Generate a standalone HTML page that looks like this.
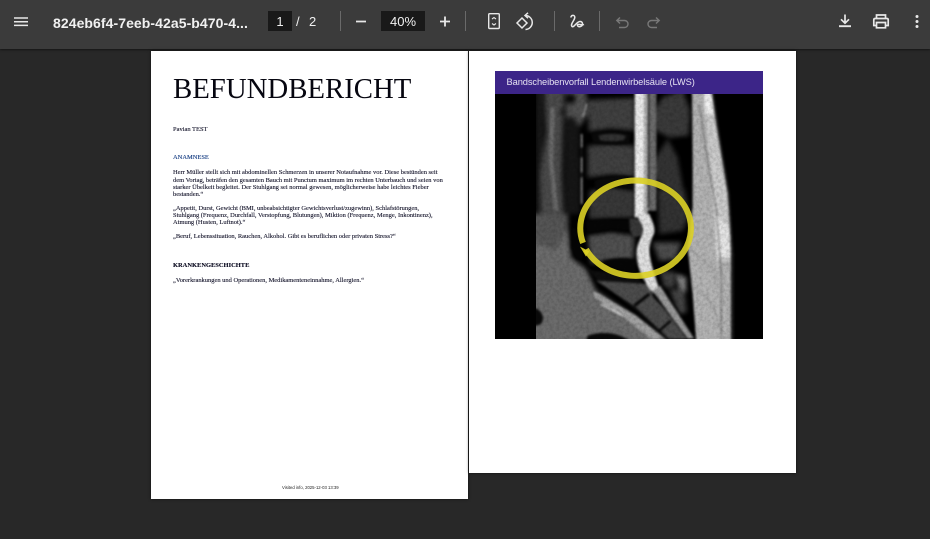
<!DOCTYPE html>
<html><head><meta charset="utf-8">
<style>
html,body{margin:0;padding:0;width:930px;height:539px;overflow:hidden;background:#282828}
.abs{position:absolute}
#bar{position:absolute;left:0;top:0;width:930px;height:49px;background:#3b3b3b;box-shadow:0 1px 2px rgba(0,0,0,.5)}
.ui{position:absolute;font-family:"Liberation Sans",sans-serif;color:#f1f1f1;white-space:nowrap}
.box{position:absolute;background:#191919;top:11px;height:20px}
.sep{position:absolute;top:11px;width:1px;height:20px;background:#6a6a6a}
.page{position:absolute;background:#fff}
.t{position:absolute;left:173px;font-family:"Liberation Serif",serif;font-size:6.46px;line-height:8px;color:#14142a;white-space:nowrap;-webkit-text-stroke:.12px #14142a;filter:blur(.25px)}
</style></head><body>
<div id="bar"></div>
<div class="ui" style="left:53px;top:14px;font-size:14px;font-weight:bold;line-height:18px;letter-spacing:.07px">824eb6f4-7eeb-42a5-b470-4...</div>
<div class="box" style="left:268px;width:24px"></div>
<div class="ui" style="left:268px;width:24px;text-align:center;top:14px;font-size:13px;line-height:16px">1</div>
<div class="ui" style="left:296px;top:14px;font-size:13px;line-height:16px">/</div>
<div class="ui" style="left:309px;top:14px;font-size:13px;line-height:16px">2</div>
<div class="sep" style="left:340px"></div>
<div class="box" style="left:381px;width:44px"></div>
<div class="ui" style="left:381px;width:44px;text-align:center;top:14px;font-size:13px;line-height:16px">40%</div>
<div class="sep" style="left:465px"></div>
<div class="sep" style="left:554px"></div>
<div class="sep" style="left:599px"></div>
<svg class="abs" style="left:0;top:0" width="930" height="49" viewBox="0 0 930 49" fill="none" stroke="#e8e8e8" stroke-width="1.4">
<path d="M14 18H28M14 21.7H28M14 25.4H28" stroke-width="1.5"/>
<path d="M356 21.5H366M440 21.5H450M445 16.5V26.5" stroke-width="1.8"/>
<rect x="488.7" y="13.7" width="10.6" height="14.8" rx="1"/>
<path d="M492 19L494 17.5L496 19M492 23.5L494 25L496 23.5" stroke-width="1.1"/>
<path d="M525 15.5A7 7 0 1 1 525.5 29.5M528 12.8L525 15.5L528 18.2" stroke-width="1.5"/>
<path d="M522 18L527 23L522 28L517 23Z" stroke-width="1.5"/>
<path d="M570.8 17.5C571.5 14.5 575 14.8 574.8 17.5C574.5 20.5 570 24.5 572 26.5C574 28 576.5 21.5 580 21.5C583 21.5 583.5 25.5 580.5 26.5C578 27.3 576.5 25 578 24.5C580 24 582 25.5 584 24.5" stroke-width="1.5"/>
<path d="M620 17.5L616.8 20.5L620 23.5M617 20.5H624.5A3.5 3.5 0 0 1 624.5 27.5H619" stroke="#787878"/>
<path d="M656 17.5L659.2 20.5L656 23.5M659 20.5H651.5A3.5 3.5 0 0 0 651.5 27.5H657" stroke="#787878"/>
<path d="M845 14.5V23M841 19.3L845 23.2L849 19.3" stroke-width="1.7"/>
<path d="M839 26.2H851" stroke-width="1.9"/>
<path d="M876.5 18.5V15H885.5V18.5M876.5 25.5H873.8V19.8C873.8 19 874.4 18.5 875.2 18.5H886.8C887.6 18.5 888.2 19 888.2 19.8V25.5H885.5M876.5 22.5H885.5V27.8H876.5Z" stroke-width="1.7"/>
<circle cx="917" cy="16.5" r="1.5" fill="#e8e8e8" stroke="none"/><circle cx="917" cy="21.5" r="1.5" fill="#e8e8e8" stroke="none"/><circle cx="917" cy="26.5" r="1.5" fill="#e8e8e8" stroke="none"/>
</svg>

<div class="page" style="left:151px;top:51px;width:317px;height:448px;box-shadow:0 0 3px rgba(0,0,0,.6)"></div>
<div class="page" style="left:469px;top:51px;width:327px;height:422px;box-shadow:0 0 3px rgba(0,0,0,.6)"></div>

<div class="t" style="top:71.5px;font-size:28.8px;line-height:34px;color:#060610;-webkit-text-stroke:0">BEFUNDBERICHT</div>
<div class="t" style="top:126px">Pavian TEST</div>
<div class="t" style="top:154px;color:#123a80;-webkit-text-stroke:.12px #123a80">ANAMNESE</div>
<div class="t" style="top:169px">Herr Müller stellt sich mit abdominellen Schmerzen in unserer Notaufnahme vor. Diese bestünden seit</div>
<div class="t" style="top:176.5px">dem Vortag, beträfen den gesamten Bauch mit Punctum maximum im rechten Unterbauch und seien von</div>
<div class="t" style="top:184px">starker Übelkeit begleitet. Der Stuhlgang sei normal gewesen, möglicherweise habe leichtes Fieber</div>
<div class="t" style="top:190.5px">bestanden.“</div>
<div class="t" style="top:204.5px">„Appetit, Durst, Gewicht (BMI, unbeabsichtigter Gewichtsverlust/zugewinn), Schlafstörungen,</div>
<div class="t" style="top:212px">Stuhlgang (Frequenz, Durchfall, Verstopfung, Blutungen), Miktion (Frequenz, Menge, Inkontinenz),</div>
<div class="t" style="top:219px">Atmung (Husten, Luftnot).“</div>
<div class="t" style="top:233px">„Beruf, Lebenssituation, Rauchen, Alkohol. Gibt es beruflichen oder privaten Stress?“</div>
<div class="t" style="top:262px;font-weight:bold;color:#05051a">KRANKENGESCHICHTE</div>
<div class="t" style="top:276.5px">„Vorerkrankungen und Operationen, Medikamenteneinnahme, Allergien.“</div>
<div class="ui" style="left:282px;top:485px;font-size:4.25px;line-height:6px;color:#222;filter:blur(.25px)">Visited info, 2025-12-03 13:39</div>

<div class="abs" style="left:495px;top:71px;width:268px;height:23px;background:#3c2588"></div>
<div class="ui" style="left:506.5px;top:76px;font-size:9.3px;line-height:13px;color:#e6e2f2;letter-spacing:-.09px;filter:blur(.2px)">Bandscheibenvorfall Lendenwirbelsäule (LWS)</div>

<svg class="abs" style="left:495px;top:94px" width="268" height="245" viewBox="495 94 268 245">
<defs>
<filter id="b" color-interpolation-filters="sRGB" x="-5%" y="-5%" width="110%" height="110%"><feGaussianBlur stdDeviation="7"/></filter>
<filter id="s" color-interpolation-filters="sRGB" x="-5%" y="-5%" width="110%" height="110%"><feGaussianBlur stdDeviation="3.2"/></filter>
<filter id="n" color-interpolation-filters="sRGB" x="0" y="0" width="100%" height="100%"><feTurbulence type="fractalNoise" baseFrequency=".3" numOctaves="3" seed="4"/><feColorMatrix values="0 0 0 0 0 0 0 0 0 0 0 0 0 0 0 1.8 0 0 0 -.6"/></filter>
<clipPath id="c"><rect x="0" y="0" width="600" height="735"/></clipPath>
</defs>
<rect x="495" y="94" width="268" height="245" fill="#000"/>
<g transform="translate(536 94) scale(.33333)" clip-path="url(#c)">
<g filter="url(#b)">
<rect x="0" y="-20" width="22" height="380" fill="#1a1a1a"/>
<path d="M25 -20H85L80 120L78 240L82 360H15L12 240L30 120Z" fill="#4a4a4a"/>
<path d="M85 60L130 60L132 360H85Z" fill="#161616"/>
<path d="M88 -20H150L155 60L130 100L115 70L90 70Z" fill="#505050"/>
<circle cx="104" cy="14" r="15" fill="#050505"/>
<circle cx="78" cy="55" r="7" fill="#111"/>
<path d="M-20 360H95L96 400L105 490L150 525L180 590L300 670L390 735L420 760H-20Z" fill="#6c6c6c"/>
<path d="M-20 360H95L96 400L60 470L-20 440Z" fill="#555"/>
<path d="M155 18L295 12V110L225 104L158 112Z" fill="#404040"/>
<path d="M155 155L225 150L295 155V248L225 242L155 250Z" fill="#404040"/>
<path d="M160 290L225 280L296 290V370L160 375Z" fill="#383838"/>
<path d="M155 425L225 415L295 425L292 495L200 500L165 510Z" fill="#505050"/>
<path d="M348 60L380 10L440 -10L462 50L458 125L400 130L360 110Z" fill="#3a3a3a"/>
<path d="M345 215L395 135L425 190L442 290L380 280L345 235Z" fill="#333"/>
<path d="M365 285H445L460 360L440 410L370 420Z" fill="#323232"/>
<path d="M350 445H435L420 495L370 500Z" fill="#4c4c4c"/>
<path d="M372 530L418 535L415 580L385 580Z" fill="#404040"/>
<path d="M400 585L445 590L452 655L430 660Z" fill="#444"/>
<path d="M420 540L450 550L450 595L430 585Z" fill="#888"/>
</g>
<g filter="url(#s)">
<path d="M468 -20H528L545 100L578 300L585 480V760H482L470 600L455 460L470 340L470 200Z" fill="#b4b4b4"/>
<path d="M503 -20H528L545 100L578 300L585 480L582 500L540 500L534 360L520 190Z" fill="#cccccc"/>
<path d="M534 360L580 400L585 490L545 490Z" fill="#e6e6e6"/>
<path d="M503 -20H528L532 60H508Z" fill="#f0f0f0"/>
<path d="M528 -20L545 100L578 300L590 480V760" stroke="#222" stroke-width="6" fill="none"/>
<path d="M490 30L510 170L540 340L556 540V760" stroke="#666" stroke-width="3" fill="none"/>
<path d="M470 470C500 500 530 510 545 560M480 590C510 600 540 640 550 700" stroke="#888" stroke-width="2" fill="none"/>
<path d="M137 120V330" stroke="#909090" stroke-width="5" fill="none"/>
<path d="M137 160V190M135 235V250" stroke="#111" stroke-width="8" fill="none"/>
<path d="M50 40L45 200L60 350" stroke="#6a6a6a" stroke-width="14" fill="none"/>
<path d="M152 30L140 70" stroke="#909090" stroke-width="5" fill="none"/>
<path d="M165 120C190 108 260 108 285 122L278 148C240 155 200 152 172 146Z" fill="#0a0a0a"/>
<path d="M188 125C210 118 250 118 270 126L264 138C240 143 210 142 192 138Z" fill="#333"/>
<path d="M175 260C210 245 270 240 290 250L295 285L225 278L178 290Z" fill="#0a0a0a"/>
<path d="M150 382C190 374 260 374 300 380L302 410L225 408L155 418Z" fill="#060606"/>
<path d="M280 374C300 370 322 378 326 400C326 420 310 432 290 428L282 410Z" fill="#383838"/>
<path d="M200 502C230 490 280 490 302 500L298 535L240 530Z" fill="#060606"/>
<path d="M150 520L185 560L300 650L395 735H455L335 590L300 540L170 530Z" fill="#101010" opacity=".85"/>
<path d="M180 560L335 570L352 610L470 735H400L300 640Z" fill="#4c4c4c"/>
<path d="M295 635L340 600" stroke="#050505" stroke-width="9" fill="none"/>
<path d="M370 710L405 680" stroke="#050505" stroke-width="7" fill="none"/>
<path d="M106 400L135 410L142 495L120 495L105 460Z" fill="#050505"/>
<path d="M-10 640C15 645 24 665 20 680C15 695 5 695 -10 695Z" fill="#0a0a0a"/>
<path d="M155 725C190 712 250 712 285 745H150Z" fill="#0a0a0a"/>
<path d="M172 590L300 665L385 735H345L250 660L175 610Z" fill="#a0a0a0"/>
<path d="M195 630L260 665" stroke="#d8d8d8" stroke-width="5" fill="none"/>
<rect x="335" y="-20" width="26" height="370" fill="#6c6c6c"/>
<rect x="296" y="-20" width="29" height="390" fill="#ececec"/>
<rect x="325" y="-20" width="10" height="380" fill="#b0b0b0"/>
<rect x="336" y="-20" width="4" height="360" fill="#222"/>
<path d="M300 360L340 360C345 375 358 395 355 415C350 430 340 445 340 470C342 500 350 525 368 580L350 600C325 560 302 525 302 480C300 450 318 430 322 410C322 395 310 380 300 360Z" fill="#e0e0e0"/>
<path d="M350 590L372 575L475 735H455Z" fill="#999"/>
<path d="M345 590L455 735H478L372 565" stroke="#0b0b0b" stroke-width="3" fill="none"/>
</g>
</g>
<rect x="536" y="94" width="200" height="245" filter="url(#n)" opacity=".16"/>
<g transform="translate(536 94) scale(.33333)">
<path d="M141 447A166 143 0 1 1 150 466" fill="none" stroke="#dbd025" stroke-width="18" opacity=".9"/>
<path d="M132 458L160 472L150 488Z" fill="#dbd025" opacity=".9"/>
</g>
</svg>
</body></html>
